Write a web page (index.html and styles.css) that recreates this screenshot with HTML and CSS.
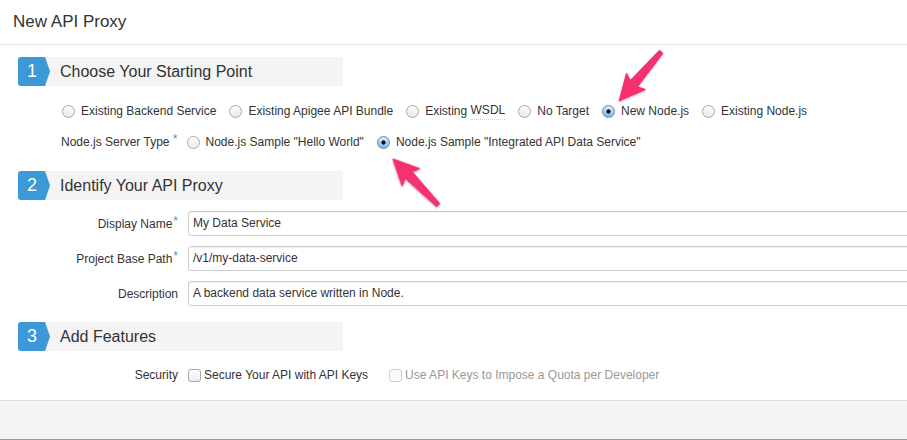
FILE: index.html
```html
<!DOCTYPE html>
<html>
<head>
<meta charset="utf-8">
<link rel="stylesheet" href="styles.css">
</head>
<body>
<div class="page">
  <header class="topbar"><h1 class="title">New API Proxy</h1></header>

  <section class="step step-first">
    <div class="step-head"><span class="badge">1</span><span class="step-title">Choose Your Starting Point</span></div>
  </section>
  <div class="radio-row row-one">
    <label class="opt"><span class="radio"></span>Existing Backend Service</label>
    <label class="opt"><span class="radio"></span>Existing Apigee API Bundle</label>
    <label class="opt"><span class="radio"></span>Existing&nbsp;<span class="dotted">WSDL</span></label>
    <label class="opt"><span class="radio"></span>No Target</label>
    <label class="opt"><span class="radio on"></span>New Node.js</label>
    <label class="opt"><span class="radio"></span>Existing Node.js</label>
  </div>
  <div class="radio-row row-two">
    <span class="row-label">Node.js Server Type <span class="req">*</span></span>
    <label class="opt"><span class="radio"></span>Node.js Sample "Hello World"</label>
    <label class="opt"><span class="radio on"></span>Node.js Sample "Integrated API Data Service"</label>
  </div>

  <section class="step step-second">
    <div class="step-head"><span class="badge">2</span><span class="step-title">Identify Your API Proxy</span></div>
  </section>
  <div class="form">
    <div class="field"><span class="flabel">Display Name<span class="req">*</span></span><div class="input">My Data Service</div></div>
    <div class="field"><span class="flabel">Project Base Path<span class="req">*</span></span><div class="input">/v1/my-data-service</div></div>
    <div class="field"><span class="flabel">Description</span><div class="input">A backend data service written in Node.</div></div>
  </div>

  <section class="step step-third">
    <div class="step-head"><span class="badge">3</span><span class="step-title">Add Features</span></div>
  </section>
  <div class="field sec">
    <span class="flabel">Security</span>
    <label class="chk"><span class="box"></span>Secure Your API with API Keys</label>
    <label class="chk disabled"><span class="box"></span>Use API Keys to Impose a Quota per Developer</label>
  </div>

  <footer class="footer"></footer>

  <svg class="arrows" width="907" height="440" viewBox="0 0 907 440">
    <defs>
      <filter id="sh" x="-20%" y="-20%" width="140%" height="140%">
        <feDropShadow dx="0" dy="1" stdDeviation="1" flood-color="#000" flood-opacity="0.25"/>
      </filter>
      <polygon id="arr" points="0,-2 42,-4.5 39,-12 64,0 39,12 42,4.5 0,2" />
    </defs>
    <g filter="url(#sh)" fill="#f5306f" stroke="#f5306f" stroke-width="1.5" stroke-linejoin="round">
      <use href="#arr" transform="translate(661,52) rotate(130.5)"/>
      <use href="#arr" transform="translate(438,205) rotate(-134.4)"/>
    </g>
  </svg>
</div>
</body>
</html>
```
FILE: styles.css
```css
* { box-sizing: border-box; }
html, body { margin: 0; padding: 0; }
body {
  width: 907px;
  height: 440px;
  overflow: hidden;
  background: #fff;
  font-family: "Liberation Sans", Arial, sans-serif;
  color: #333;
}
.page { position: relative; width: 907px; height: 440px; }

.topbar {
  height: 45px;
  border-bottom: 1px solid #e4e4e4;
  padding-left: 13px;
}
.title {
  margin: 0;
  font-weight: normal;
  font-size: 17px;
  line-height: 43px;
  color: #333;
}

.step { padding-left: 18px; }
.step-first { margin-top: 12px; }
.step-second { margin-top: 17px; }
.step-third { margin-top: 16px; }
.step-head {
  width: 325px;
  height: 29px;
  background: #f4f4f4;
  display: flex;
  align-items: center;
}
.badge {
  width: 32px;
  height: 29px;
  background: #3c98d6;
  color: #fff;
  font-size: 18px;
  line-height: 29px;
  padding-left: 9px;
  border-radius: 3px 0 0 3px;
  clip-path: polygon(0 0, 27px 0, 32px 50%, 27px 100%, 0 100%);
}
.step-title {
  margin-left: 10px;
  font-size: 16px;
  color: #333;
}

.radio-row {
  display: flex;
  align-items: center;
  height: 24px;
  font-size: 12px;
}
.row-one { margin-top: 13px; padding-left: 62px; }
.row-two { margin-top: 7px; padding-left: 61px; }
.row-label { margin-right: 9px; }
.req { color: #3c98d6; font-size: 12px; position: relative; top: -3px; }
.opt {
  display: flex;
  align-items: center;
  margin-right: 13px;
  white-space: nowrap;
}
.radio {
  width: 13px;
  height: 13px;
  border-radius: 50%;
  border: 1px solid #a8a8a8;
  background: linear-gradient(#ffffff, #e9e9e9);
  margin-right: 6px;
  flex: none;
}
.radio.on {
  border-color: #5d87b8;
  background: radial-gradient(circle, #111 0 1.8px, transparent 2.4px), linear-gradient(#d9edfd, #79b6ea);
}
.dotted { border-bottom: 1px dotted #d0d0d0; padding-bottom: 2px; }

.form { margin-top: 11px; }
.field {
  display: flex;
  align-items: center;
  height: 25px;
  margin-bottom: 10px;
  font-size: 12px;
}
.flabel {
  width: 178px;
  flex: none;
  text-align: right;
  margin-right: 10px;
  white-space: nowrap;
}
.flabel .req { margin-left: 1px; }
.input {
  flex: none;
  width: 760px;
  height: 25px;
  border: 1px solid #cccccc;
  border-radius: 3px;
  padding-left: 4px;
  line-height: 23px;
  font-size: 12px;
  color: #333;
  box-shadow: inset 0 1px 1px rgba(0,0,0,0.06);
}

.sec { margin-top: 12px; height: 24px; margin-bottom: 0; }
.chk {
  display: flex;
  align-items: center;
  white-space: nowrap;
  margin-right: 21px;
}
.box {
  width: 13px;
  height: 13px;
  border: 1px solid #a8a8a8;
  border-radius: 3px;
  background: linear-gradient(#fff, #ececec);
  margin-right: 3px;
  flex: none;
}
.chk.disabled { color: #999; }
.chk.disabled .box { border-color: #cfcfcf; background: #fafafa; }

.footer {
  margin-top: 13px;
  height: 40px;
  background: #f4f4f4;
  border-top: 1px solid #dcdcdc;
  border-bottom: 1px solid #9a9a9a;
}

.arrows {
  position: absolute;
  left: 0;
  top: 0;
  pointer-events: none;
}
```
